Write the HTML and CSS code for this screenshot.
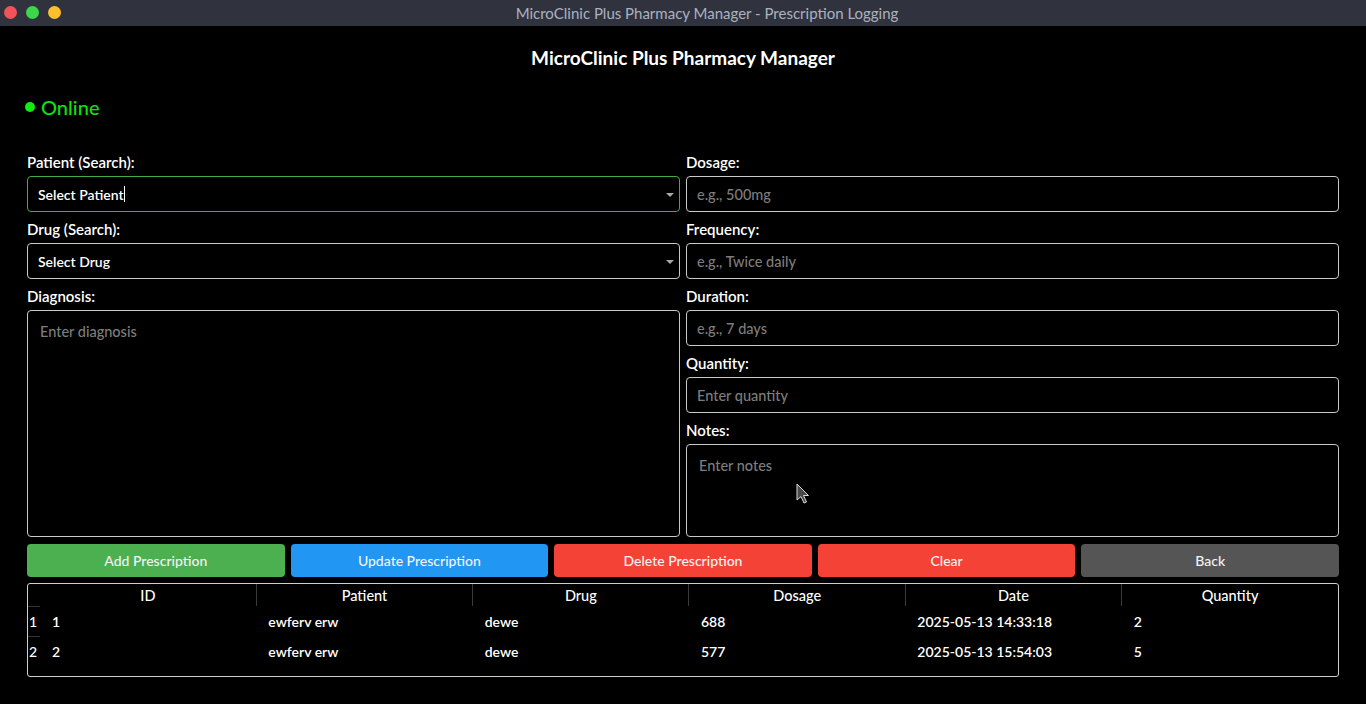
FILE: index.html
```html
<!DOCTYPE html>
<html lang="en">
<head>
<meta charset="utf-8">
<title>MicroClinic Plus Pharmacy Manager - Prescription Logging</title>
<link rel="stylesheet" href="styles.css">
</head>
<body>
<div class="titlebar">
  <div class="lights">
    <span class="light red"></span>
    <span class="light green"></span>
    <span class="light yellow"></span>
  </div>
  <div class="wintitle">MicroClinic Plus Pharmacy Manager - Prescription Logging</div>
</div>
<main class="app">
  <h1 class="heading">MicroClinic Plus Pharmacy Manager</h1>
  <div class="status"><span class="dot"></span><span>Online</span></div>

  <div class="form">
    <div class="col left">
      <div class="field">
        <label class="label">Patient (Search):</label>
        <div class="input select focused"><span class="value">Select Patient</span><span class="caret"></span><span class="arrow"></span></div>
      </div>
      <div class="field">
        <label class="label">Drug (Search):</label>
        <div class="input select"><span class="value">Select Drug</span><span class="arrow"></span></div>
      </div>
      <div class="field grow">
        <label class="label">Diagnosis:</label>
        <div class="textarea diag"><span class="ph">Enter diagnosis</span></div>
      </div>
    </div>
    <div class="col right">
      <div class="field">
        <label class="label">Dosage:</label>
        <div class="input"><span class="ph">e.g., 500mg</span></div>
      </div>
      <div class="field">
        <label class="label">Frequency:</label>
        <div class="input"><span class="ph">e.g., Twice daily</span></div>
      </div>
      <div class="field">
        <label class="label">Duration:</label>
        <div class="input"><span class="ph">e.g., 7 days</span></div>
      </div>
      <div class="field">
        <label class="label">Quantity:</label>
        <div class="input"><span class="ph">Enter quantity</span></div>
      </div>
      <div class="field grow">
        <label class="label">Notes:</label>
        <div class="textarea notes"><span class="ph">Enter notes</span></div>
      </div>
    </div>
  </div>

  <div class="buttons">
    <button class="btn add">Add Prescription</button>
    <button class="btn update">Update Prescription</button>
    <button class="btn delete">Delete Prescription</button>
    <button class="btn clear">Clear</button>
    <button class="btn back">Back</button>
  </div>

  <div class="tablewrap">
    <table class="grid">
      <colgroup>
        <col class="c-rh">
        <col><col><col><col><col><col>
      </colgroup>
      <thead>
        <tr>
          <th class="corner"></th>
          <th>ID</th><th>Patient</th><th>Drug</th><th>Dosage</th><th>Date</th><th class="last">Quantity</th>
        </tr>
      </thead>
      <tbody>
        <tr>
          <td class="rh">1</td>
          <td>1</td><td>ewferv erw</td><td>dewe</td><td>688</td><td>2025-05-13 14:33:18</td><td>2</td>
        </tr>
        <tr>
          <td class="rh">2</td>
          <td>2</td><td>ewferv erw</td><td>dewe</td><td>577</td><td>2025-05-13 15:54:03</td><td>5</td>
        </tr>
      </tbody>
    </table>
  </div>
</main>
<svg class="cursor" width="14" height="22" viewBox="0 0 14 22">
  <path d="M1 1 L1 17 L5 13.5 L8 20 L10.5 19 L7.5 12.5 L12.5 12.5 Z" fill="#4a4a4a" stroke="#d8d8d8" stroke-width="1" stroke-linejoin="round"/>
</svg>
</body>
</html>
```
FILE: styles.css
```css
* { box-sizing: border-box; }
html, body { margin: 0; padding: 0; }
body {
  background: #000;
  color: #fff;
  font-family: Lato, "Noto Sans", "DejaVu Sans", sans-serif;
  width: 1366px;
  height: 704px;
  overflow: hidden;
  position: relative;
}
.titlebar {
  height: 26px;
  background: #30333d;
  position: relative;
  display: flex;
  align-items: center;
  justify-content: center;
}
.lights {
  position: absolute;
  left: 4px;
  top: 6px;
  display: flex;
  gap: 9px;
}
.light { width: 13px; height: 13px; border-radius: 50%; display: block; }
.light.red { background: #f2525a; }
.light.green { background: #3dd64c; }
.light.yellow { background: #fcc02e; }
.wintitle {
  color: #aab2c0;
  font-size: 15px;
  padding-left: 48px;
}
.app { padding: 0 27px; }
.heading {
  margin: 22px 0 0;
  text-align: center;
  font-size: 19px;
  line-height: 20px;
  font-weight: 700;
}
.status {
  margin-top: 27px;
  margin-left: -2px;
  height: 24px;
  display: flex;
  align-items: center;
  gap: 6px;
  color: #10e010;
  font-size: 20px;
  font-weight: 500;
}
.dot { width: 10px; height: 10px; border-radius: 50%; background: #10ee10; }
.form {
  margin-top: 26px;
  display: grid;
  grid-template-columns: 1fr 1fr;
  gap: 6px;
  height: 392px;
}
.col { display: flex; flex-direction: column; }
.field { display: flex; flex-direction: column; }
.field.grow { flex: 1; }
.label {
  padding-top: 7px;
  line-height: 20px;
  margin-bottom: 4px;
  font-size: 15px;
  font-weight: 600;
}
.input {
  height: 36px;
  border: 1px solid #c9c9c9;
  border-radius: 4px;
  display: flex;
  align-items: center;
  padding: 0 10px;
  font-size: 14px;
  position: relative;
}
.input.focused { border-color: #3fae45; }
.value { font-weight: 600; color: #fff; font-size: 14px; }
.caret { width: 1px; height: 16px; background: #fff; }
.ph { color: #7d7d7d; font-size: 14.5px; font-weight: 500; }
.arrow {
  position: absolute;
  right: 5px;
  top: 16px;
  width: 0; height: 0;
  border-left: 4px solid transparent;
  border-right: 4px solid transparent;
  border-top: 4px solid #a8a8a8;
}
.textarea {
  flex: 1;
  border: 1px solid #c9c9c9;
  border-radius: 4px;
  padding: 12px 12px;
}
.textarea .ph { display: block; line-height: 18px; }
.buttons {
  margin-top: 7px;
  display: grid;
  grid-template-columns: repeat(5, 1fr);
  gap: 6px;
}
.btn {
  height: 33px;
  border: none;
  border-radius: 4px;
  color: #f3f3f3;
  font-family: inherit;
  font-size: 14px;
  font-weight: 500;
  padding: 0;
}
.btn.add { background: #4caf50; }
.btn.update { background: #2196f3; }
.btn.delete { background: #f44336; }
.btn.clear { background: #f44336; }
.btn.back { background: #555555; }
.tablewrap {
  margin-top: 6px;
  height: 94px;
  border: 1px solid #cfcfcf;
  border-radius: 3px;
  overflow: hidden;
}
.grid {
  width: 100%;
  table-layout: fixed;
  border-collapse: collapse;
  font-size: 14px;
}
.c-rh { width: 12px; }
.grid th {
  height: 22px;
  font-size: 14.5px;
  font-weight: 500;
  text-align: center;
  padding: 0;
  border-right: 1px solid #3a3a3a;
  vertical-align: middle;
}
.grid th.corner { border-right: none; border-bottom: 1px solid #333; }
.grid th.last { border-right: none; }
.grid td {
  height: 30px;
  padding: 0 0 0 12px;
  font-weight: 600;
  vertical-align: middle;
  white-space: nowrap;
}
.grid td.rh {
  padding: 0 0 0 1px;
  border-bottom: 1px solid #333;
  font-weight: 500;
}
.grid tr:last-child td.rh { border-bottom: none; }
.cursor {
  position: absolute;
  left: 796px;
  top: 483px;
}
```
